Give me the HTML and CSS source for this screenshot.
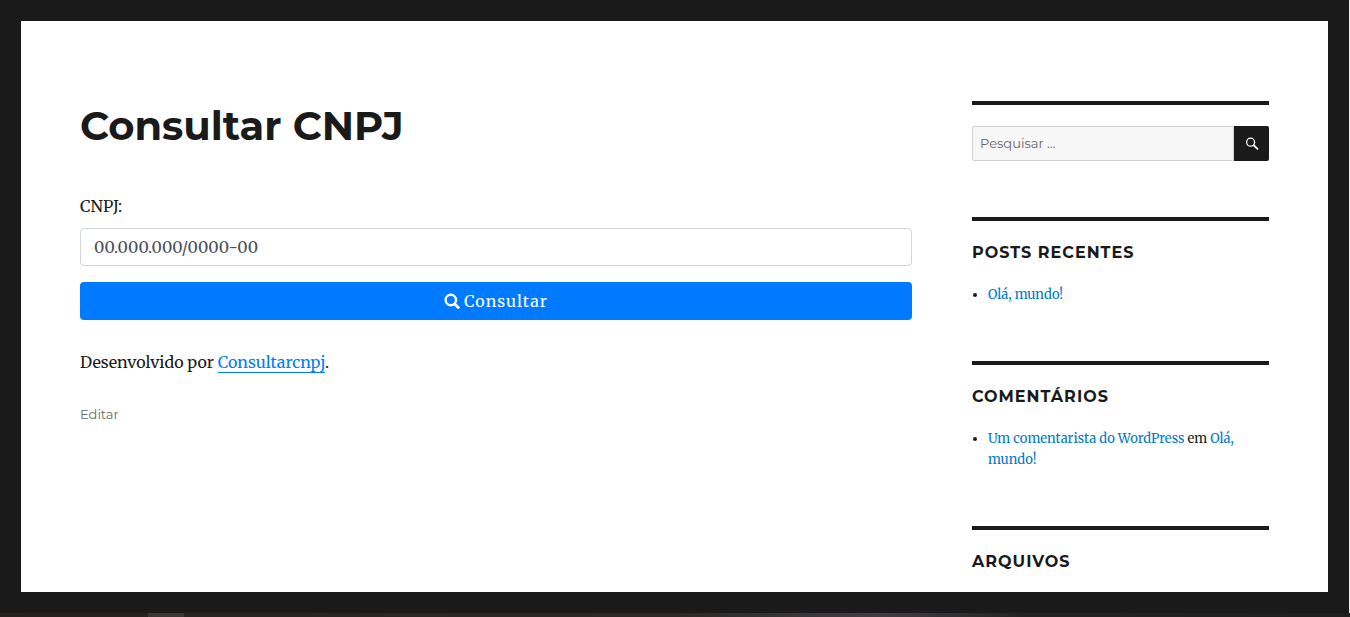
FILE: index.html
```html
<!DOCTYPE html>
<html lang="pt-BR">
<head>
<meta charset="utf-8">
<meta name="viewport" content="width=device-width, initial-scale=1">
<title>Consultar CNPJ</title>
<link rel="stylesheet" href="styles.css">
</head>
<body>
<div class="page">
  <div class="site">
    <main class="content">
      <h1 class="entry-title">Consultar CNPJ</h1>
      <form class="cnpj-form">
        <label class="cnpj-label" for="cnpj">CNPJ:</label>
        <input class="cnpj-input" id="cnpj" type="text" placeholder="00.000.000/0000-00">
        <button class="cnpj-button" type="button">
          <svg class="cnpj-icon" viewBox="0 0 16 16" aria-hidden="true"><circle cx="6.8" cy="7" r="5.2" fill="none" stroke="currentColor" stroke-width="2.4"/><path d="M10.8 11l3.4 3.4" stroke="currentColor" stroke-width="2.8" stroke-linecap="round"/></svg>
          <span>Consultar</span>
        </button>
      </form>
      <p class="credit">Desenvolvido por <a class="credit-link" href="#">Consultarcnpj</a>.</p>
      <footer class="entry-footer"><a class="edit-link" href="#">Editar</a></footer>
    </main>
    <aside class="sidebar">
      <section class="widget">
        <form class="search-form">
          <input class="search-field" type="search" placeholder="Pesquisar …" aria-label="Pesquisar">
          <button class="search-submit" type="button" aria-label="Pesquisar">
            <svg class="search-icon" viewBox="0 0 14 14" aria-hidden="true"><circle cx="5.6" cy="5.2" r="4" fill="none" stroke="currentColor" stroke-width="1.3"/><path d="M8.4 8l4.6 4.4" stroke="currentColor" stroke-width="1.8"/></svg>
          </button>
        </form>
      </section>
      <section class="widget">
        <h2 class="widget-title">Posts recentes</h2>
        <ul class="widget-list">
          <li><a class="widget-link" href="#">Olá, mundo!</a></li>
        </ul>
      </section>
      <section class="widget">
        <h2 class="widget-title">Comentários</h2>
        <ul class="widget-list">
          <li><a class="widget-link" href="#">Um comentarista do WordPress</a> em <a class="widget-link" href="#">Olá, mundo!</a></li>
        </ul>
      </section>
      <section class="widget">
        <h2 class="widget-title">Arquivos</h2>
      </section>
    </aside>
  </div>
</div>
<div class="taskbar"><div class="taskbar-item"></div></div>
</body>
</html>
```
FILE: styles.css
```css
* {
  box-sizing: border-box;
}

body {
  margin: 0;
  min-height: 100vh;
  display: flex;
  flex-direction: column;
  background: #1a1a1a;
  color: #1a1a1a;
  font-family: Merriweather, "Liberation Serif", serif;
  font-size: 16px;
  line-height: 28px;
}

.page {
  flex: 1;
  display: flex;
  padding: 21px;
  border-right: 1px solid #f0f0f0;
}

.site {
  flex: 1;
  display: flex;
  justify-content: space-between;
  gap: 60px;
  padding: 80px 59px 0;
  background: #fff;
}

.content {
  flex: 1;
}

.entry-title {
  margin: 0 0 42px;
  font-family: Montserrat, Inter, sans-serif;
  font-size: 40px;
  font-weight: 700;
  line-height: 49px;
}

.cnpj-form {
  display: flex;
  flex-direction: column;
}

.cnpj-label {
  margin-bottom: 8px;
}

.cnpj-input {
  height: 38px;
  margin-bottom: 16px;
  padding: 6px 13px;
  border: 1px solid #ced4da;
  border-radius: 4px;
  background: #fff;
  color: #495057;
  font-family: inherit;
  font-size: 16px;
}

.cnpj-input::placeholder {
  color: #495057;
  opacity: 1;
}

.cnpj-button {
  display: flex;
  align-items: center;
  justify-content: center;
  gap: 4px;
  height: 38px;
  padding: 0;
  border: 0;
  border-radius: 4px;
  background: #007bff;
  color: #fff;
  font-family: inherit;
  font-size: 16px;
  letter-spacing: 1px;
}

.cnpj-icon {
  width: 16px;
  height: 16px;
}

.credit {
  margin: 28px 0;
}

.credit-link {
  border-bottom: 1px solid #007bff;
  color: #007bff;
  text-decoration: none;
}

.entry-footer {
  font-family: Montserrat, Inter, sans-serif;
  font-size: 13px;
  line-height: 21px;
}

.edit-link {
  color: #686868;
  text-decoration: none;
}

.sidebar {
  width: 297px;
  flex-shrink: 0;
}

.widget {
  margin-bottom: 56px;
  padding-top: 21px;
  border-top: 4px solid #1a1a1a;
}

.widget:last-child {
  margin-bottom: 0;
}

.search-form {
  display: flex;
}

.search-field {
  flex: 1;
  min-width: 0;
  height: 35px;
  padding: 0 7px 2px;
  border: 1px solid #d1d1d1;
  border-radius: 2px 0 0 2px;
  background: #f7f7f7;
  font-family: Montserrat, Inter, sans-serif;
  font-size: 13px;
}

.search-field::placeholder {
  color: #686868;
  opacity: 1;
}

.search-submit {
  display: flex;
  align-items: center;
  justify-content: center;
  width: 35px;
  height: 35px;
  padding: 0;
  border: 0;
  border-radius: 0 2px 2px 0;
  background: #1a1a1a;
  color: #fff;
}

.search-icon {
  width: 14px;
  height: 14px;
}

.widget-title {
  margin: 0;
  font-family: Montserrat, Inter, sans-serif;
  font-size: 16px;
  font-weight: 700;
  line-height: 21px;
  letter-spacing: 1px;
  text-transform: uppercase;
}

.widget-list {
  margin: 21px 0 0;
  padding-left: 16px;
  font-size: 13px;
  line-height: 21px;
}

.widget-link {
  color: #007acc;
  text-decoration: none;
}

.taskbar {
  height: 4px;
  padding-left: 148px;
  background: linear-gradient(90deg, #242220 0%, #2a2927 50%, #403e42 65%, #232222 76%, #1e1e1e 100%);
}

.taskbar-item {
  width: 36px;
  height: 4px;
  background: #3a3837;
}
```
